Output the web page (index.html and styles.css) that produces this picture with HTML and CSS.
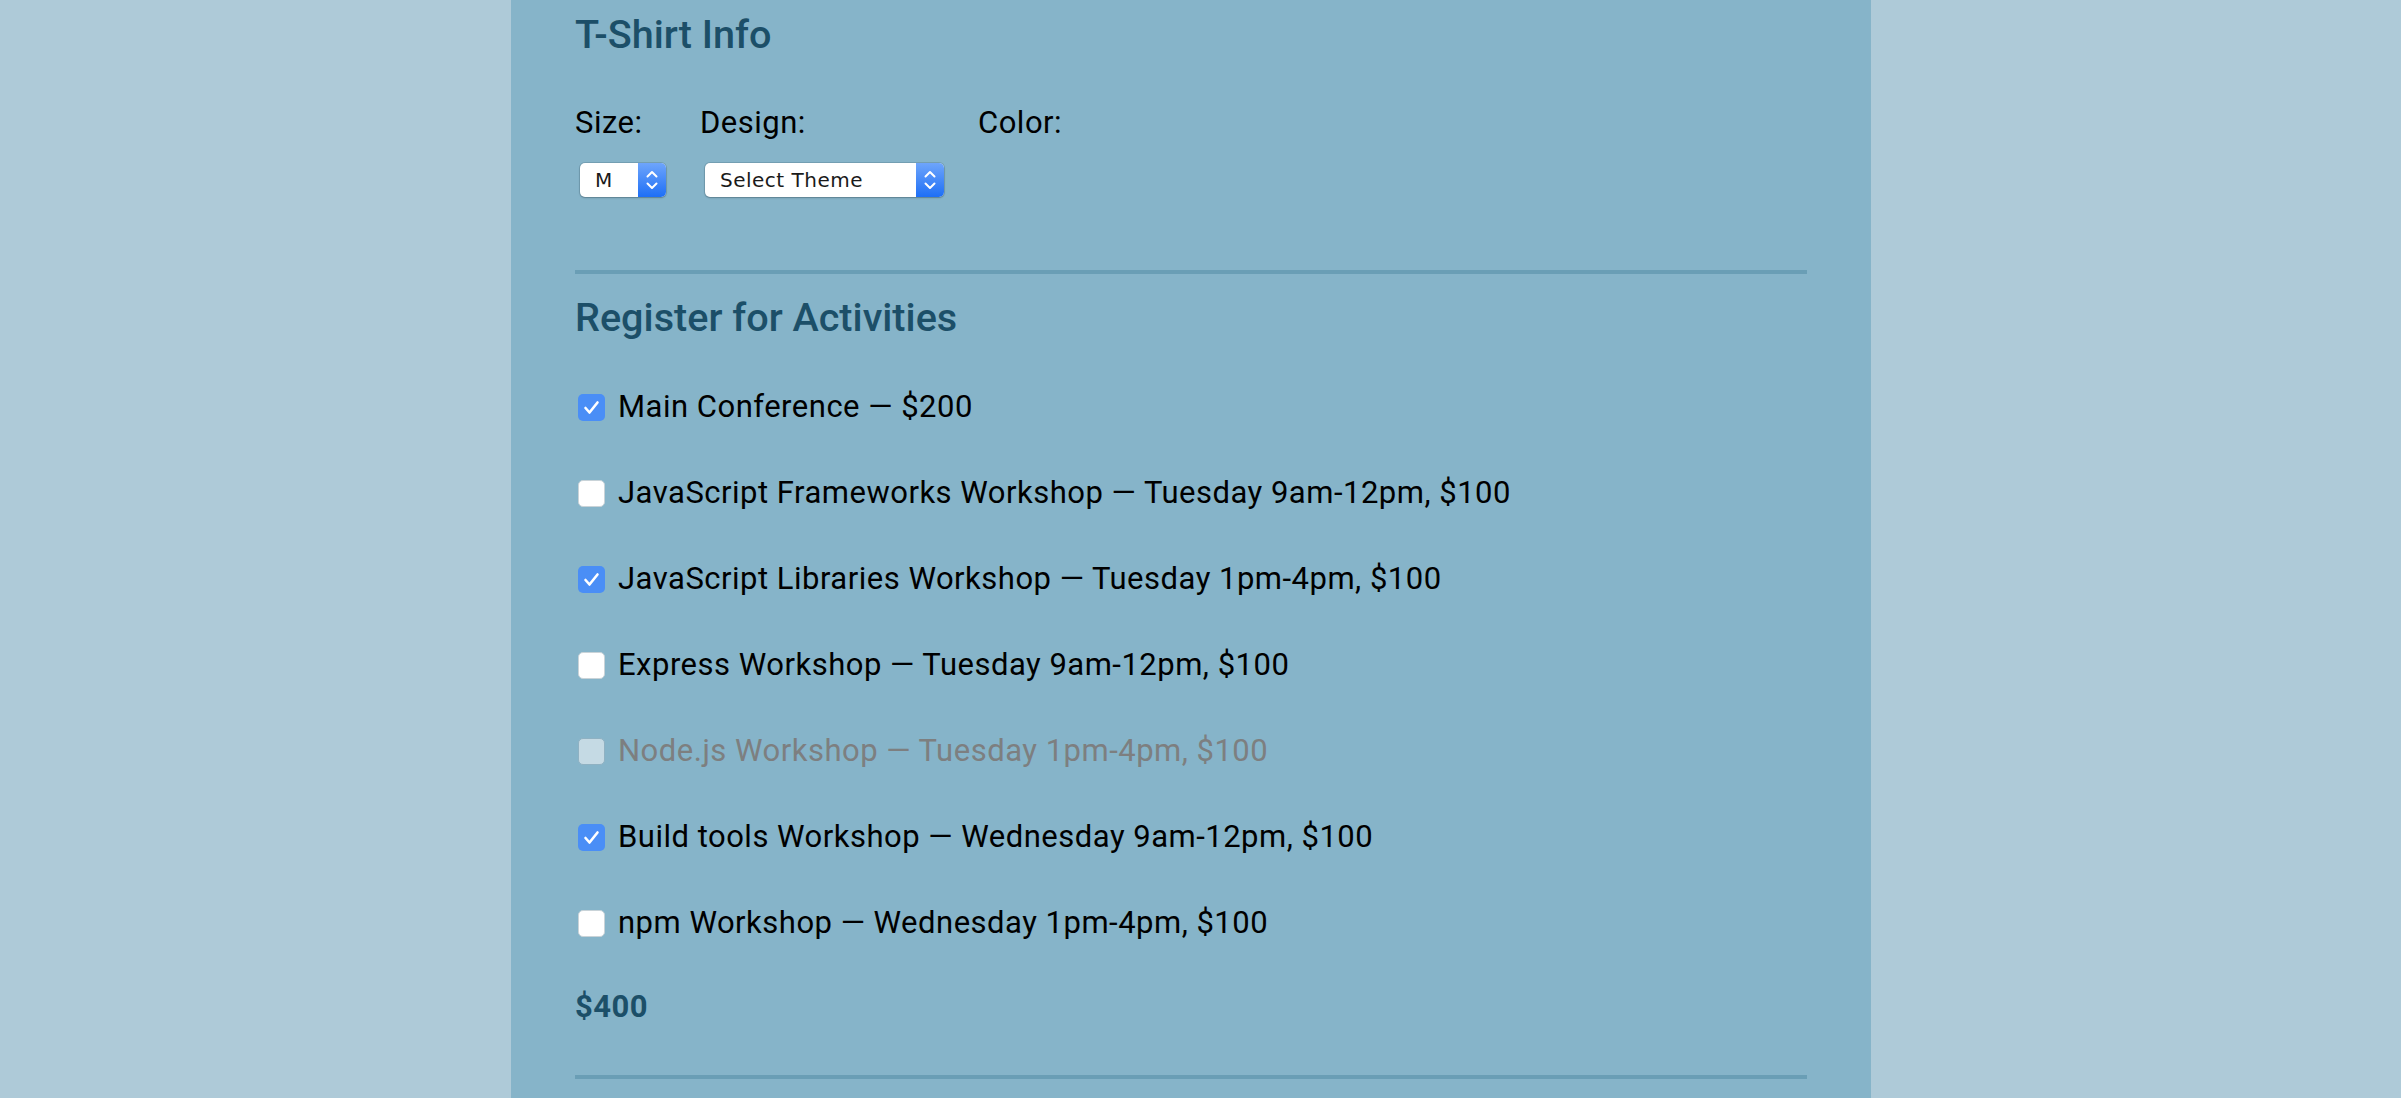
FILE: index.html
```html
<!DOCTYPE html>
<html lang="en">
<head>
<meta charset="utf-8">
<title>Registration</title>
<link rel="stylesheet" href="styles.css">
</head>
<body>
<main class="page">
  <form class="panel">
    <section class="section">
      <h2 class="section-title">T-Shirt Info</h2>
      <div class="shirt-fields">
        <div class="field">
          <label class="field-label">Size:</label>
          <div class="select select-size">
            <span class="select-value">M</span>
            <span class="select-arrows"><svg width="28" height="34" viewBox="0 0 28 34"><path d="M9.5 13.5 L14 9 L18.5 13.5 M9.5 20.5 L14 25 L18.5 20.5" fill="none" stroke="#fff" stroke-width="2" stroke-linecap="round" stroke-linejoin="round"/></svg></span>
          </div>
        </div>
        <div class="field">
          <label class="field-label">Design:</label>
          <div class="select select-design">
            <span class="select-value">Select Theme</span>
            <span class="select-arrows"><svg width="28" height="34" viewBox="0 0 28 34"><path d="M9.5 13.5 L14 9 L18.5 13.5 M9.5 20.5 L14 25 L18.5 20.5" fill="none" stroke="#fff" stroke-width="2" stroke-linecap="round" stroke-linejoin="round"/></svg></span>
          </div>
        </div>
        <div class="field">
          <label class="field-label">Color:</label>
        </div>
      </div>
    </section>
    <hr class="rule rule-first">
    <section class="section">
      <h2 class="section-title title-activities">Register for Activities</h2>
      <ul class="activity-list">
        <li class="activity"><span class="box checked"><svg width="27" height="27" viewBox="0 0 27 27"><path d="M7.5 14 L11.5 18.5 L19.5 8.5" fill="none" stroke="#fff" stroke-width="2.6" stroke-linecap="round" stroke-linejoin="round"/></svg></span>Main Conference — $200</li>
        <li class="activity"><span class="box"></span>JavaScript Frameworks Workshop — Tuesday 9am-12pm, $100</li>
        <li class="activity"><span class="box checked"><svg width="27" height="27" viewBox="0 0 27 27"><path d="M7.5 14 L11.5 18.5 L19.5 8.5" fill="none" stroke="#fff" stroke-width="2.6" stroke-linecap="round" stroke-linejoin="round"/></svg></span>JavaScript Libraries Workshop — Tuesday 1pm-4pm, $100</li>
        <li class="activity"><span class="box"></span>Express Workshop — Tuesday 9am-12pm, $100</li>
        <li class="activity disabled"><span class="box"></span>Node.js Workshop — Tuesday 1pm-4pm, $100</li>
        <li class="activity"><span class="box checked"><svg width="27" height="27" viewBox="0 0 27 27"><path d="M7.5 14 L11.5 18.5 L19.5 8.5" fill="none" stroke="#fff" stroke-width="2.6" stroke-linecap="round" stroke-linejoin="round"/></svg></span>Build tools Workshop — Wednesday 9am-12pm, $100</li>
        <li class="activity"><span class="box"></span>npm Workshop — Wednesday 1pm-4pm, $100</li>
      </ul>
      <p class="total">$400</p>
    </section>
    <hr class="rule rule-last">
  </form>
</main>
</body>
</html>
```

FILE: styles.css
```css
html, body {
  margin: 0;
  padding: 0;
}
body {
  background: #aecad8;
  font-family: Roboto, "Liberation Sans", Arial, sans-serif;
  color: #000;
  height: 1098px;
  overflow: hidden;
}
.page {
  padding-right: 19px;
}
.panel {
  width: 1360px;
  margin: 0 auto;
  box-sizing: border-box;
  background: #86b4c9;
  padding: 11px 64px 40px;
  min-height: 1098px;
}
.section {
  margin: 0;
  padding: 0;
}
.section-title {
  margin: 0;
  font-size: 39.6px;
  line-height: 48px;
  font-weight: 500;
  color: #1c4f68;
}
.title-activities {
  margin-top: 20px;
}
.shirt-fields {
  display: flex;
  gap: 34px;
  margin-top: 46px;
}
.field {
  display: flex;
  flex-direction: column;
}
.field-label {
  font-size: 31px;
  line-height: 36px;
  letter-spacing: 0.5px;
}
.select {
  margin-top: 22px;
  margin-left: 5px;
  height: 34px;
  display: flex;
  align-items: stretch;
  background: #fff;
  border-radius: 5px;
  box-shadow: 0 0 0 1px rgba(40, 70, 90, 0.18), 0 1px 2px rgba(0, 0, 0, 0.22);
  overflow: hidden;
  box-sizing: border-box;
}
.select-size {
  width: 86px;
}
.select-design {
  width: 239px;
  margin-left: 5px;
}
.select-value {
  flex: 1;
  padding-left: 15px;
  font-family: "DejaVu Sans", "Liberation Sans", sans-serif;
  font-size: 20px;
  letter-spacing: 0.5px;
  line-height: 34px;
  color: #1a1a1a;
}
.select-arrows {
  width: 28px;
  display: flex;
  background: linear-gradient(to bottom, #6ea5fb, #1e6ff6);
}
.rule {
  border: 0;
  margin: 0;
  height: 4px;
  background: #6a9eb5;
}
.rule-first {
  margin-top: 73px;
}
.rule-last {
  margin-top: 50px;
}
.activity-list {
  list-style: none;
  margin: 47px 0 0;
  padding: 0;
  display: flex;
  flex-direction: column;
  gap: 50px;
}
.activity {
  display: flex;
  align-items: center;
  height: 36px;
  font-size: 31px;
  line-height: 36px;
  letter-spacing: 0.5px;
}
.box {
  width: 27px;
  height: 27px;
  box-sizing: border-box;
  margin-left: 3px;
  margin-right: 13px;
  border-radius: 5px;
  background: #fff;
  border: 1px solid #c9d3d8;
  display: flex;
  flex-shrink: 0;
  margin-top: 1px;
}
.box.checked {
  background: #4a8ef6;
  border: 0;
}
.activity.disabled {
  color: #7d7f80;
}
.activity.disabled .box {
  background: #c5dae4;
  border-color: #8fb1c2;
}
.total {
  margin: 48px 0 0;
  font-size: 31px;
  line-height: 36px;
  letter-spacing: 0.5px;
  font-weight: 700;
  color: #1c4f68;
}
```
